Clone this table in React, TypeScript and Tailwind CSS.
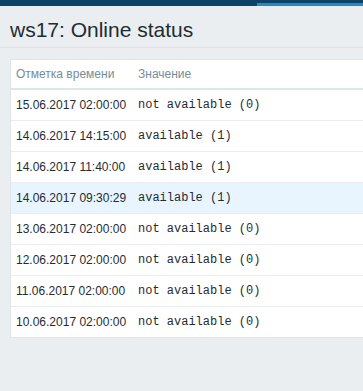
import React from 'react';

interface HistoryItem {
  clock: string;
  value: string;
}

const items: HistoryItem[] = [
  { clock: '15.06.2017 02:00:00', value: 'not available (0)' },
  { clock: '14.06.2017 14:15:00', value: 'available (1)' },
  { clock: '14.06.2017 11:40:00', value: 'available (1)' },
  { clock: '14.06.2017 09:30:29', value: 'available (1)' },
  { clock: '13.06.2017 02:00:00', value: 'not available (0)' },
  { clock: '12.06.2017 02:00:00', value: 'not available (0)' },
  { clock: '11.06.2017 02:00:00', value: 'not available (0)' },
  { clock: '10.06.2017 02:00:00', value: 'not available (0)' },
];

// row under the cursor
const hoveredIndex = 3;

const App: React.FC = () => {
  return (
    <div className="min-h-screen bg-[#ebeef0] font-['Liberation_Sans',Arial,sans-serif] text-[#1f2c33]">
      {/* Top navigation strip */}
      <div className="flex h-[6px] bg-[#0b4468]">
        <div className="flex-1" />
        <div className="flex w-[106px] flex-col">
          <div className="h-[3px] bg-[#0b4468]" />
          <div className="h-[3px] bg-[#2b87c3]" />
        </div>
      </div>

      {/* Page title */}
      <div className="flex h-[42px] items-center border-b border-[#dde3e6] px-[10px] pt-[5px]">
        <h1 className="text-[21px] leading-none font-normal">ws17: Online status</h1>
      </div>

      {/* History table */}
      <div className="mt-[11px] ml-[10px] border-y border-l border-[#dfe4e7] bg-white">
        <table className="w-full border-collapse text-[12px]">
          <thead>
            <tr className="h-[29px] border-b-2 border-[#dfe4e7] text-left text-[#768d99]">
              <th className="w-[122px] px-[5px] font-normal whitespace-nowrap">Отметка времени</th>
              <th className="px-[5px] font-normal">Значение</th>
            </tr>
          </thead>
          <tbody>
            {items.map((item, i) => (
              <tr
                key={item.clock}
                className={
                  'h-[31px] ' +
                  (i < items.length - 1 ? 'border-b border-[#ebeef0] ' : '') +
                  (i === hoveredIndex ? 'bg-[#e8f5ff]' : '')
                }
              >
                <td className="px-[5px] whitespace-nowrap">{item.clock}</td>
                <td className="px-[5px] font-['Liberation_Mono','Courier_New',monospace] whitespace-pre">
                  {item.value}
                </td>
              </tr>
            ))}
          </tbody>
        </table>
      </div>
    </div>
  );
};

export default App;
